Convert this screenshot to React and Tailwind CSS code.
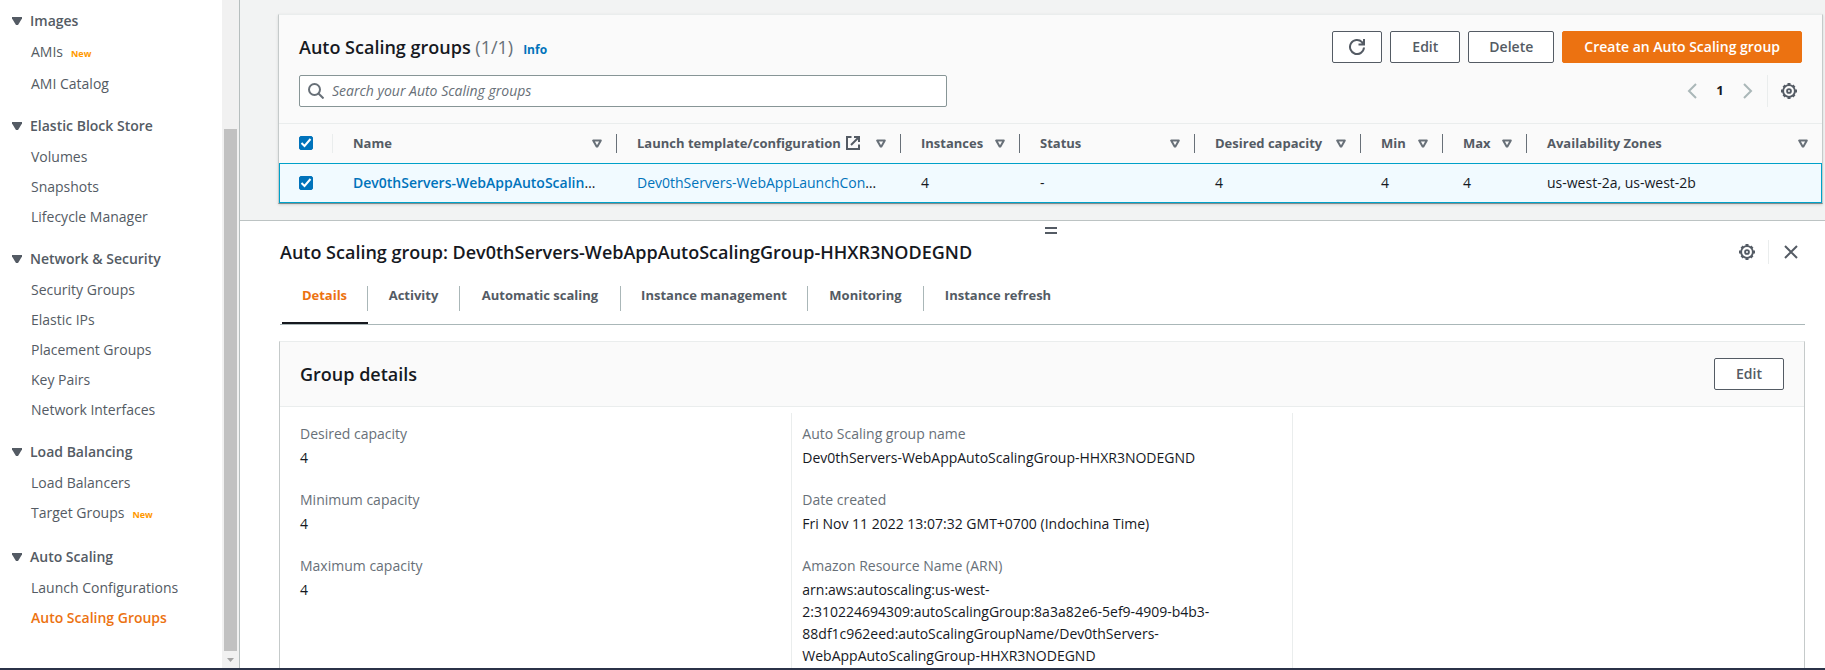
import React from 'react';

const NAV = [
  { title: 'Images', items: [{ label: 'AMIs', isNew: true }, { label: 'AMI Catalog' }] },
  {
    title: 'Elastic Block Store',
    items: [{ label: 'Volumes' }, { label: 'Snapshots' }, { label: 'Lifecycle Manager' }],
  },
  {
    title: 'Network & Security',
    items: [
      { label: 'Security Groups' },
      { label: 'Elastic IPs' },
      { label: 'Placement Groups' },
      { label: 'Key Pairs' },
      { label: 'Network Interfaces' },
    ],
  },
  {
    title: 'Load Balancing',
    items: [{ label: 'Load Balancers' }, { label: 'Target Groups', isNew: true }],
  },
  {
    title: 'Auto Scaling',
    items: [{ label: 'Launch Configurations' }, { label: 'Auto Scaling Groups', active: true }],
  },
];

const TABS = [
  { label: 'Details', width: 'w-[86px]' },
  { label: 'Activity', width: 'w-[92px]' },
  { label: 'Automatic scaling', width: 'w-[161px]' },
  { label: 'Instance management', width: 'w-[187px]' },
  { label: 'Monitoring', width: 'w-[116px]' },
  { label: 'Instance refresh', width: 'w-[148px]' },
];

const COLUMNS = [
  { label: 'Name', width: 'w-[284px]' },
  { label: 'Launch template/configuration', width: 'w-[284px]', external: true },
  { label: 'Instances', width: 'w-[119px]' },
  { label: 'Status', width: 'w-[175px]' },
  { label: 'Desired capacity', width: 'w-[166px]' },
  { label: 'Min', width: 'w-[82px]' },
  { label: 'Max', width: 'w-[84px]' },
  { label: 'Availability Zones', width: '' },
];

function GearIcon() {
  return (
    <svg viewBox="0 0 16 16" className="size-4" fill="none" stroke="currentColor" aria-hidden="true">
      <circle cx="8" cy="8" r="5.900" strokeWidth="1.900" />
      <path
        strokeWidth="3"
        d="M8 0v2M8 14v2M0 8h2M14 8h2M2.600 2.600l1.200 1.200M12.200 12.200l1.200 1.200M2.600 13.400l1.200-1.200M12.200 3.800l1.200-1.200"
      />
      <circle cx="8" cy="8" r="1.900" strokeWidth="1.900" />
    </svg>
  );
}

function RefreshIcon() {
  return (
    <svg viewBox="0 0 16 16" className="size-4" fill="none" stroke="currentColor" strokeWidth="2" aria-hidden="true">
      <path d="M15 8.500A7 7 0 1 1 13 3.100L14.600 5" />
      <path d="M15 0v5.500H9.500" />
      <path d="M12 4.500h3v-3z" fill="currentColor" stroke="none" />
    </svg>
  );
}

function SearchIcon() {
  return (
    <svg viewBox="0 0 16 16" className="size-4 text-[#687078]" fill="none" stroke="currentColor" strokeWidth="2" aria-hidden="true">
      <circle cx="6.500" cy="6.500" r="5.500" />
      <path d="M10.500 10.500l5 5" />
    </svg>
  );
}

function ExternalIcon() {
  return (
    <svg viewBox="0 0 14 14" className="size-3.5 shrink-0" fill="none" stroke="currentColor" strokeWidth="2" aria-hidden="true">
      <path d="M5.500 1H1v12h12V8.500" />
      <path d="M8 1h5v5" />
      <path d="M13 1L5 9" />
    </svg>
  );
}

function SortIcon() {
  return (
    <svg viewBox="0 0 10 9" className="h-[9px] w-2.5" fill="none" stroke="#687078" strokeWidth="2" aria-hidden="true">
      <path d="M1.200 1.500h7.600L5.400 7.500h-.8z" strokeLinejoin="round" />
    </svg>
  );
}

function Chevron({ d }) {
  return (
    <svg viewBox="0 0 10 16" className="h-4 w-2.5" fill="none" stroke="#aab7b8" strokeWidth="2" aria-hidden="true">
      <path d={d} />
    </svg>
  );
}

function Checkbox({ label }) {
  return (
    <span className="grid size-3.5">
      <input
        type="checkbox"
        aria-label={label}
        defaultChecked
        className="peer col-start-1 row-start-1 size-3.5 appearance-none rounded-xs border border-[#879596] bg-white checked:border-[#0073bb] checked:bg-[#0073bb]"
      />
      <svg viewBox="0 0 14 14" className="pointer-events-none col-start-1 row-start-1 hidden size-3.5 peer-checked:block" fill="none" stroke="#fff" strokeWidth="2" aria-hidden="true">
        <path d="M2.500 7l3 3 6-7" />
      </svg>
    </span>
  );
}

function Button({ children, primary, className = 'px-[21px]', ...rest }) {
  const look = primary ? 'border-[#ec7211] bg-[#ec7211] text-white' : 'border-[#545b64] bg-white text-[#545b64]';
  return (
    <button
      type="button"
      className={`flex h-8 shrink-0 items-center justify-center whitespace-nowrap rounded-xs border text-sm font-semibold ${look} ${className}`}
      {...rest}
    >
      {children}
    </button>
  );
}

function Sidebar() {
  return (
    <aside className="flex w-60 shrink-0 border-r border-[#b6bebe] bg-white">
      <nav className="flex min-w-0 flex-1 flex-col gap-5 overflow-hidden pt-2.5 text-[#545b64]">
        {NAV.map((section) => (
          <section key={section.title}>
            <h3 className="mb-[9px]">
              <button type="button" className="flex h-[22px] items-center gap-2 pl-3 text-sm font-semibold">
                <svg viewBox="0 0 10 8" className="h-2 w-2.5" aria-hidden="true">
                  <path d="M0 0h10v1.500L6 8H4L0 1.500z" fill="#545b64" />
                </svg>
                {section.title}
              </button>
            </h3>
            <ul className="flex flex-col gap-2 pl-[31px]">
              {section.items.map((item) => (
                <li key={item.label} className={item.isNew ? 'flex items-baseline gap-2 pb-0.5' : 'flex'}>
                  <a
                    href="#"
                    className={item.active ? 'text-sm leading-[22px] font-semibold text-[#ec7211]' : 'text-sm leading-[22px]'}
                  >
                    {item.label}
                  </a>
                  {item.isNew && <span className="text-[9px] leading-4 font-bold text-[#ff9900]">New</span>}
                </li>
              ))}
            </ul>
          </section>
        ))}
      </nav>
      <div className="flex w-[17px] shrink-0 flex-col items-center bg-[#f1f1f1] pt-[129px]" aria-hidden="true">
        <div className="w-[13px] flex-1 bg-[#c1c1c1]" />
        <div className="flex h-[17px] items-center">
          <svg viewBox="0 0 7 4" className="h-1 w-[7px]">
            <path d="M0 0h7L3.500 4z" fill="#a3a3a3" />
          </svg>
        </div>
      </div>
    </aside>
  );
}

function GroupsTable() {
  return (
    <table className="w-full table-fixed border-collapse text-left text-[#16191f]">
      <thead>
        <tr className="h-[39px] border-t border-[#eaeded] bg-[#fafafa] text-[13px] text-[#545b64]">
          <th className="w-[54px] p-0">
            <div className="flex h-[19px] items-center border-r border-[#eaeded] pl-5">
              <Checkbox label="Select all groups" />
            </div>
          </th>
          {COLUMNS.map((col) => (
            <th key={col.label} className={`p-0 font-bold ${col.width}`}>
              <div className={`flex h-[19px] items-center justify-between pr-[14px] pl-5 ${col.width ? 'border-r border-[#687078]' : ''}`}>
                <span className="flex items-center gap-[5px] whitespace-nowrap">
                  {col.label}
                  {col.external && <ExternalIcon />}
                </span>
                <button type="button" aria-label={`Sort by ${col.label}`}>
                  <SortIcon />
                </button>
              </div>
            </th>
          ))}
        </tr>
      </thead>
      <tbody>
        <tr className="h-10 bg-[#f1faff] text-sm outline outline-1 -outline-offset-1 outline-[#00a1c9]">
          <td className="p-0 pl-5">
            <Checkbox label="Select group" />
          </td>
          <td className="p-0 pl-5 whitespace-nowrap">
            <a href="#" className="font-semibold text-[#0073bb]">Dev0thServers-WebAppAutoScalin</a>…
          </td>
          <td className="p-0 pl-5 whitespace-nowrap">
            <a href="#" className="text-[#0073bb]">Dev0thServers-WebAppLaunchCon</a>…
          </td>
          <td className="p-0 pl-5">4</td>
          <td className="p-0 pl-5">-</td>
          <td className="p-0 pl-5">4</td>
          <td className="p-0 pl-5">4</td>
          <td className="p-0 pl-5">4</td>
          <td className="p-0 pl-5 whitespace-nowrap">us-west-2a, us-west-2b</td>
        </tr>
      </tbody>
    </table>
  );
}

function GroupsPanel() {
  return (
    <section className="border border-t-[#eaeded] border-r-[#c5caca] border-b-[#7f8c8d] border-l-[#c5caca] bg-[#fafafa] shadow-sm">
      <div className="flex flex-col gap-3 px-5 py-4">
        <div className="flex items-center justify-between">
          <div className="flex items-baseline gap-2.5">
            <h1 className="text-lg font-semibold text-[#16191f]">
              Auto Scaling groups <span className="font-normal text-[#687078]">(1/1)</span>
            </h1>
            <a href="#" className="text-xs font-bold text-[#0073bb]">Info</a>
          </div>
          <div className="flex gap-2">
            <Button className="w-[50px]" aria-label="Refresh">
              <RefreshIcon />
            </Button>
            <Button className="w-[70px]">Edit</Button>
            <Button className="w-[86px]">Delete</Button>
            <Button primary>Create an Auto Scaling group</Button>
          </div>
        </div>
        <div className="flex items-center justify-between">
          <label className="flex h-8 w-[648px] items-center gap-2 rounded-xs border border-[#879596] bg-white px-2">
            <SearchIcon />
            <input
              type="search"
              aria-label="Search your Auto Scaling groups"
              placeholder="Search your Auto Scaling groups"
              className="min-w-0 flex-1 text-sm outline-none placeholder:text-[#687078] placeholder:italic"
            />
          </label>
          <div className="flex h-8 items-center">
            <button type="button" aria-label="Previous page">
              <Chevron d="M9 1L2 8l7 7" />
            </button>
            <button type="button" className="w-[46px] text-[13px] font-bold text-[#16191f]">1</button>
            <button type="button" aria-label="Next page">
              <Chevron d="M1 1l7 7-7 7" />
            </button>
            <button type="button" aria-label="Preferences" className="ml-3.5 flex h-8 items-center border-l border-[#eaeded] pr-[5px] pl-[13px] text-[#545b64]">
              <GearIcon />
            </button>
          </div>
        </div>
      </div>
      <GroupsTable />
    </section>
  );
}

function Field({ label, value }) {
  return (
    <div className="flex flex-col gap-0.5">
      <dt className="text-[#687078]">{label}</dt>
      <dd className="text-[#16191f]">{value}</dd>
    </div>
  );
}

function GroupDetails() {
  return (
    <section className="flex flex-1 flex-col border border-b-0 border-t-[#eaeded] border-r-[#c5caca] border-l-[#c5caca]">
      <div className="flex items-center justify-between border-b border-[#eaeded] bg-[#fafafa] px-5 py-4">
        <h2 className="text-lg leading-6 font-semibold text-[#16191f]">Group details</h2>
        <Button className="w-[70px]">Edit</Button>
      </div>
      <div className="mt-1.5 grid flex-1 grid-cols-3 px-2.5 text-sm leading-[22px]">
        <dl className="flex flex-col gap-5 px-2.5 pt-2.5">
          <Field label="Desired capacity" value="4" />
          <Field label="Minimum capacity" value="4" />
          <Field label="Maximum capacity" value="4" />
        </dl>
        <dl className="flex flex-col gap-5 border-x border-[#eaeded] px-2.5 pt-2.5">
          <Field label="Auto Scaling group name" value="Dev0thServers-WebAppAutoScalingGroup-HHXR3NODEGND" />
          <Field label="Date created" value="Fri Nov 11 2022 13:07:32 GMT+0700 (Indochina Time)" />
          <Field
            label="Amazon Resource Name (ARN)"
            value="arn:aws:autoscaling:us-west-2:310224694309:autoScalingGroup:8a3a82e6-5ef9-4909-b4b3-88df1c962eed:autoScalingGroupName/Dev0thServers-WebAppAutoScalingGroup-HHXR3NODEGND"
          />
        </dl>
        <div />
      </div>
    </section>
  );
}

function SplitPanel() {
  return (
    <section className="flex min-h-0 flex-1 flex-col overflow-hidden border-t border-[#bcc3c3] bg-white pr-5 pl-[39px]">
      <button type="button" aria-label="Resize panel" className="mt-1.5 ml-[18px] flex flex-col gap-[3px] self-center">
        <span className="h-0.5 w-3 bg-[#545b64]" />
        <span className="h-0.5 w-3 bg-[#545b64]" />
      </button>
      <div className="mt-1 flex items-center justify-between pr-1.5 pl-px">
        <h2 className="text-lg font-semibold text-[#16191f]">
          Auto Scaling group: Dev0thServers-WebAppAutoScalingGroup-HHXR3NODEGND
        </h2>
        <div className="flex h-6 items-center text-[#545b64]">
          <button type="button" aria-label="Panel preferences" className="pr-[13px]">
            <GearIcon />
          </button>
          <button type="button" aria-label="Close panel" className="flex h-6 items-center border-l border-[#eaeded] pl-3.5">
            <svg viewBox="0 0 16 16" className="size-4" fill="none" stroke="currentColor" strokeWidth="2" aria-hidden="true">
              <path d="M2 2l12 12M14 2L2 14" />
            </svg>
          </button>
        </div>
      </div>
      <div role="tablist" className="mt-4 ml-px flex h-[43px] shrink-0 border-b border-[#aab7b8] pl-0.5">
        {TABS.map((tab, i) => (
          <button
            key={tab.label}
            type="button"
            role="tab"
            aria-selected={i === 0}
            className={`flex flex-col border-b-2 ${tab.width} ${i === 0 ? 'border-[#16191f] text-[#ec7211]' : 'border-transparent text-[#545b64]'}`}
          >
            <span
              className={`mt-1 flex h-[25px] w-full justify-center text-[13px] font-bold whitespace-nowrap ${i < TABS.length - 1 ? 'border-r border-[#aab7b8]' : ''}`}
            >
              {tab.label}
            </span>
          </button>
        ))}
      </div>
      <div className="mt-4 flex flex-1 flex-col">
        <GroupDetails />
      </div>
    </section>
  );
}

export default function App() {
  return (
    <div className="flex h-screen overflow-hidden border-b-2 border-[#2b3348] bg-white font-['Open_Sans','Noto_Sans',sans-serif]">
      <Sidebar />
      <main className="flex min-w-0 flex-1 flex-col">
        <div className="bg-[#f2f3f3] pt-3.5 pr-0.5 pb-4 pl-[38px]">
          <GroupsPanel />
        </div>
        <SplitPanel />
      </main>
    </div>
  );
}
